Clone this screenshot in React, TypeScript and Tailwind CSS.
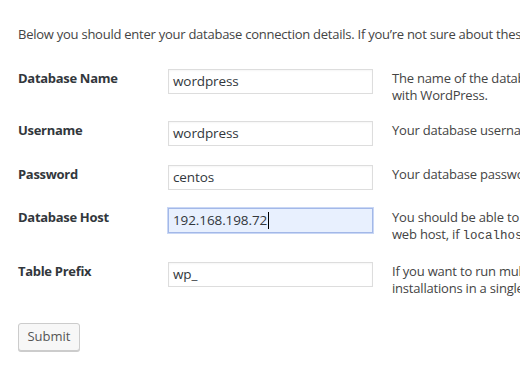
import React from "react"

const font = { fontFamily: '"Open Sans", "Noto Sans", sans-serif' }

type Row = {
  label: string
  value: string
  desc: React.ReactNode[]
  gap: string
  focused?: boolean
}

const rows: Row[] = [
  {
    label: "Database Name",
    value: "wordpress",
    desc: ["The name of the database you want to use", "with WordPress."],
    gap: "mb-[17px]",
  },
  {
    label: "Username",
    value: "wordpress",
    desc: ["Your database username."],
    gap: "mb-[19px]",
  },
  {
    label: "Password",
    value: "centos",
    desc: ["Your database password."],
    gap: "mb-[18px]",
  },
  {
    label: "Database Host",
    value: "192.168.198.72",
    desc: [
      "You should be able to get this info from your",
      <>
        web host, if{" "}
        <code className="font-['Liberation_Mono',monospace] text-[12.5px] leading-none tracking-normal">localhost</code>{" "}
        doesn’t work.
      </>,
    ],
    gap: "mb-[19px]",
    focused: true,
  },
  {
    label: "Table Prefix",
    value: "wp_",
    desc: ["If you want to run multiple WordPress", "installations in a single database, change this."],
    gap: "mb-0",
  },
]

function FieldRow({ row }: { row: Row }) {
  return (
    <div className={`flex items-start ${row.gap}`}>
      <div className="w-[150px] shrink-0 pt-px text-[13px] leading-[17px] font-bold tracking-[-0.3px] text-[#32373c]">
        {row.label}
      </div>
      <div
        className={`flex h-[25px] w-[205px] shrink-0 items-center border px-[4px] text-[13.5px] tracking-[-0.1px] text-[#32373c] ${
          row.focused
            ? "border-[#a3b8e8] bg-[#e8f0fe] shadow-[0_0_0_1px_#c9d7f5]"
            : "border-[#dddddd] bg-white shadow-[inset_0_1px_2px_rgba(0,0,0,0.04)]"
        }`}
      >
        <span>{row.value}</span>
        {row.focused && <span className="ml-px inline-block h-[17px] w-px bg-black" />}
      </div>
      <div className="ml-[19px] shrink-0 pt-px text-[13px] leading-[17px] whitespace-nowrap tracking-[-0.2px] text-[#444]">
        {row.desc.map((line, i) => (
          <div key={i} className="h-[17px]">
            {line}
          </div>
        ))}
      </div>
    </div>
  )
}

export default function App() {
  return (
    <div style={font} className="h-[368px] w-[520px] overflow-hidden bg-white px-[18px] text-[#444]">
      <p className="pt-[26px] text-[13px] leading-[17px] whitespace-nowrap tracking-[-0.25px]">
        Below you should enter your database connection details. If you’re not sure about these, contact your host.
      </p>
      <div className="mt-[26px]">
        {rows.map((row) => (
          <FieldRow key={row.label} row={row} />
        ))}
      </div>
      <button className="mt-[26px] block h-[28px] w-[62px] rounded-[3px] border border-[#cccccc] bg-[#f7f7f7] text-[13px] text-[#555] shadow-[0_1px_0_#cccccc]">
        Submit
      </button>
    </div>
  )
}
